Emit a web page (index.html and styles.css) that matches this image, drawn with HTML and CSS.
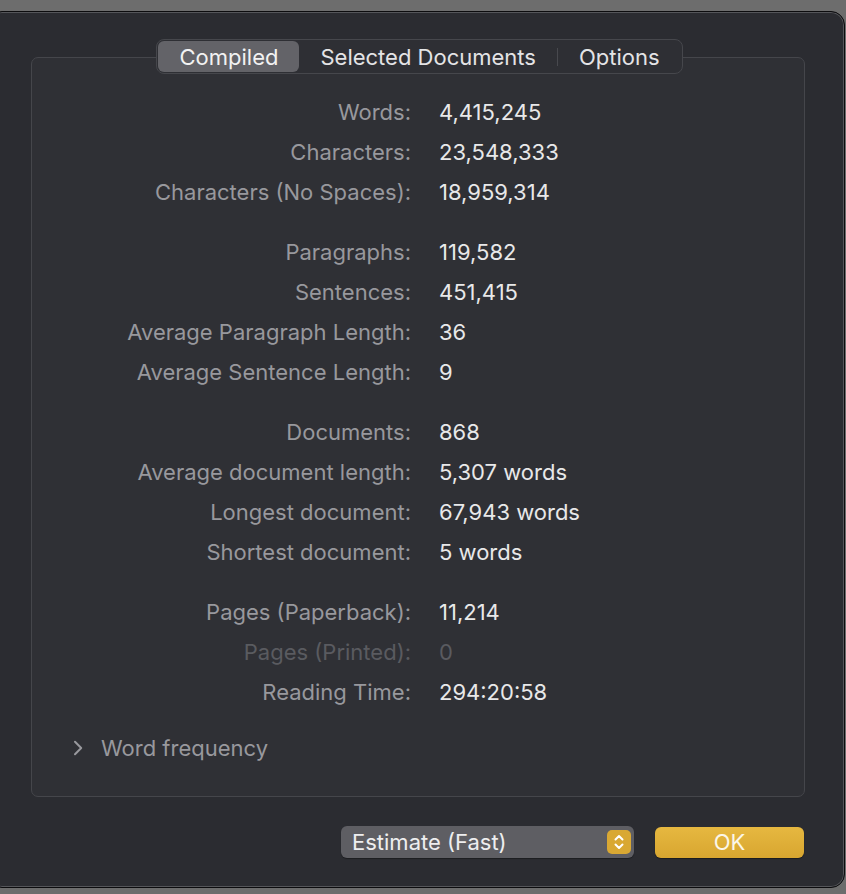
FILE: index.html
```html
<!DOCTYPE html>
<html>
<head>
<meta charset="utf-8">
<link rel="stylesheet" href="styles.css">
</head>
<body>
<div class="window">
  <div class="tabs-row">
    <div class="tabs">
      <div class="seg seg-selected">Compiled</div>
      <div class="seg">Selected Documents</div>
      <div class="seg-sep"></div>
      <div class="seg">Options</div>
    </div>
  </div>
  <div class="group">
    <div class="stats">
      <div class="section">
        <div class="label">Words:</div><div class="value">4,415,245</div>
        <div class="label">Characters:</div><div class="value">23,548,333</div>
        <div class="label">Characters (No Spaces):</div><div class="value">18,959,314</div>
      </div>
      <div class="section">
        <div class="label">Paragraphs:</div><div class="value">119,582</div>
        <div class="label">Sentences:</div><div class="value">451,415</div>
        <div class="label">Average Paragraph Length:</div><div class="value">36</div>
        <div class="label">Average Sentence Length:</div><div class="value">9</div>
      </div>
      <div class="section">
        <div class="label">Documents:</div><div class="value">868</div>
        <div class="label">Average document length:</div><div class="value">5,307 words</div>
        <div class="label">Longest document:</div><div class="value">67,943 words</div>
        <div class="label">Shortest document:</div><div class="value">5 words</div>
      </div>
      <div class="section">
        <div class="label">Pages (Paperback):</div><div class="value">11,214</div>
        <div class="label disabled">Pages (Printed):</div><div class="value disabled">0</div>
        <div class="label">Reading Time:</div><div class="value">294:20:58</div>
      </div>
    </div>
    <div class="disclosure">
      <svg class="chevron" width="10" height="16" viewBox="0 0 10 16"><path d="M2 1.8 L8.2 8 L2 14.2" fill="none" stroke="#98989d" stroke-width="2" stroke-linecap="round" stroke-linejoin="round"/></svg>
      <span>Word frequency</span>
    </div>
  </div>
  <div class="footer">
    <div class="popup">
      <span class="popup-text">Estimate (Fast)</span>
      <span class="stepper">
        <svg width="24" height="24" viewBox="0 0 24 24"><path d="M8.5 9.5 L12 6 L15.5 9.5" fill="none" stroke="#fff" stroke-width="2" stroke-linecap="round" stroke-linejoin="round"/><path d="M8.5 14.5 L12 18 L15.5 14.5" fill="none" stroke="#fff" stroke-width="2" stroke-linecap="round" stroke-linejoin="round"/></svg>
      </span>
    </div>
    <div class="ok">OK</div>
  </div>
</div>
</body>
</html>
```
FILE: styles.css
```css
html, body {
  margin: 0;
  padding: 0;
  background: #6d6d6d;
  overflow: hidden;
}
body {
  width: 846px;
  height: 894px;
  font-family: Inter, "Noto Sans", sans-serif;
  font-size: 22px;
}
.window {
  box-sizing: border-box;
  margin: 11px 0 0 -12px;
  width: 857px;
  height: 877px;
  background: #2b2c31;
  border: 1px solid #0c0c0e;
  border-radius: 14px;
  box-shadow: inset 0 0 0 1px #55565a;
  padding: 27px 39px 0 42px;
}
.tabs-row {
  display: flex;
  justify-content: center;
  padding-left: 3px;
  position: relative;
  z-index: 1;
}
.tabs {
  display: flex;
  align-items: center;
  height: 35px;
  box-sizing: border-box;
  border: 1px solid #46474c;
  border-radius: 8px;
  background: #2e2f34;
  padding: 1px;
}
.seg {
  height: 31px;
  line-height: 33px;
  padding: 0 21px;
  color: #e4e4e6;
  border-radius: 6px;
}
.seg-selected {
  background: #636368;
  color: #f2f2f2;
}
.seg-sep {
  width: 1px;
  height: 18px;
  background: #48494e;
}
.group {
  box-sizing: border-box;
  margin-top: -17px;
  height: 740px;
  border: 1px solid #45464b;
  border-radius: 7px;
  background: #2f3035;
  padding-top: 34px;
}
.stats {
  display: flex;
  flex-direction: column;
  gap: 20px;
}
.section {
  display: grid;
  grid-template-columns: 379px auto;
  column-gap: 28px;
  line-height: 40px;
}
.label {
  text-align: right;
  color: #98989d;
  white-space: nowrap;
}
.value {
  color: #e8e8e9;
  white-space: nowrap;
}
.label.disabled, .value.disabled {
  color: #5a5b60;
}
.disclosure {
  margin-top: 16px;
  display: flex;
  align-items: center;
  height: 40px;
  padding-left: 41px;
  color: #98989d;
}
.chevron {
  margin-right: 18px;
}
.footer {
  display: flex;
  justify-content: flex-end;
  align-items: center;
  gap: 21px;
  margin-top: 29px;
  padding-right: 1px;
}
.popup {
  box-sizing: border-box;
  width: 293px;
  height: 32px;
  background: #5e5e63;
  border-radius: 6px;
  display: flex;
  align-items: center;
  justify-content: space-between;
  padding: 0 3px 0 11px;
  color: #eeeeef;
  box-shadow: 0 1px 1px rgba(0,0,0,0.35);
}
.stepper {
  width: 24px;
  height: 24px;
  border-radius: 5px;
  background: #d9a833;
  display: flex;
}
.ok {
  box-sizing: border-box;
  width: 149px;
  height: 31px;
  border-radius: 6px;
  background: linear-gradient(#e6b840, #d8a630);
  color: #fbf6e8;
  text-align: center;
  line-height: 31px;
  box-shadow: 0 1px 1px rgba(0,0,0,0.4);
}
```
